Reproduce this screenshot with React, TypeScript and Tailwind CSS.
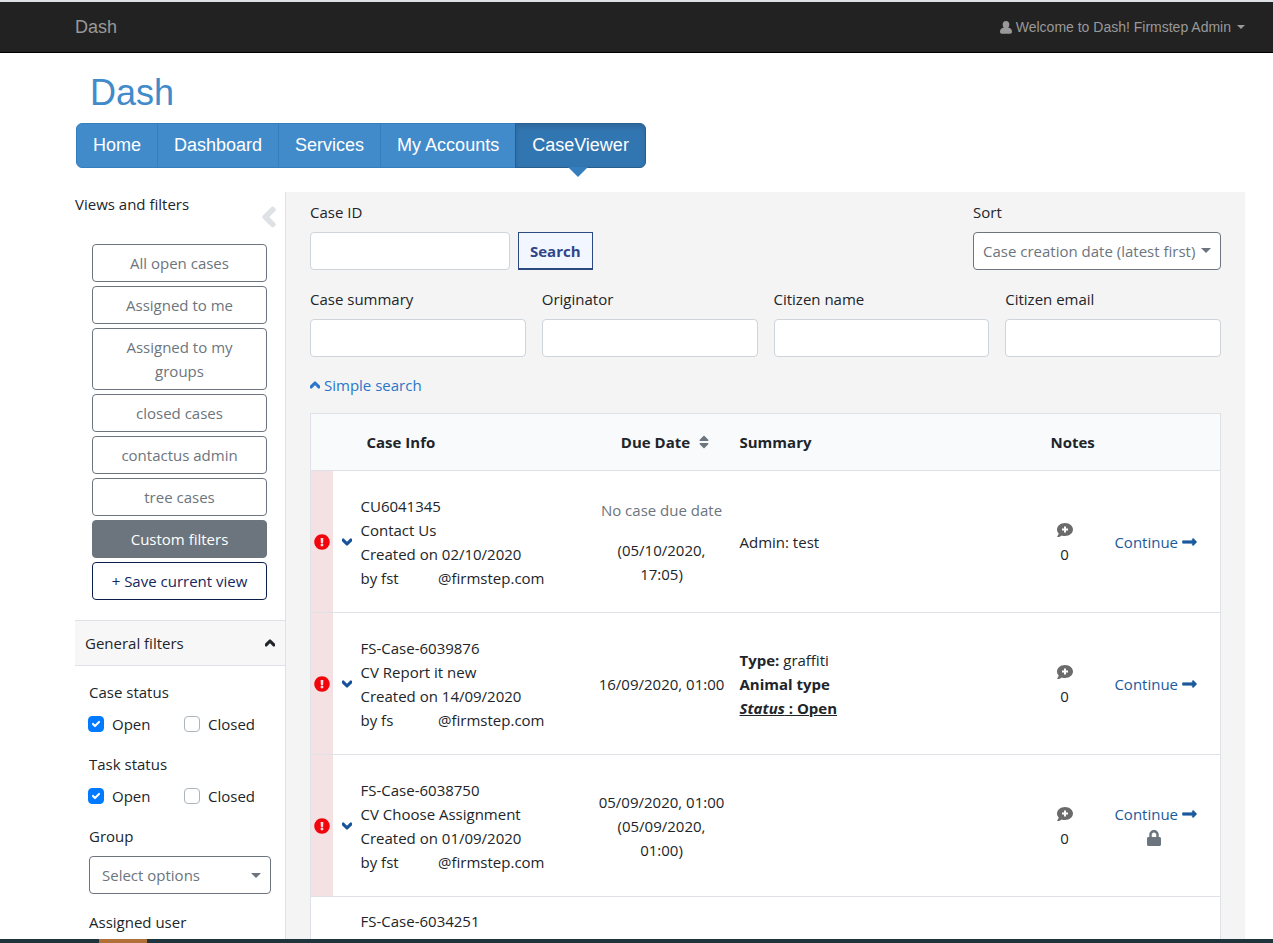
import React, { useState } from 'react';
import {
    FaChevronDown,
    FaChevronLeft,
    FaChevronUp,
    FaCheck,
    FaExclamationCircle,
    FaLock,
    FaLongArrowAltRight,
    FaSort,
} from 'react-icons/fa';
import clsx from 'clsx';

const NAV = ['Home', 'Dashboard', 'Services', 'My Accounts', 'CaseViewer'];

const VIEWS = ['All open cases', 'Assigned to me', 'Assigned to my groups', 'closed cases', 'contactus admin', 'tree cases', 'Custom filters'];

const SEARCH_FIELDS = [
    { id: 'summary', label: 'Case summary' },
    { id: 'originator', label: 'Originator' },
    { id: 'citizen-name', label: 'Citizen name' },
    { id: 'citizen-email', label: 'Citizen email' },
];

type CaseRow = {
    id: string;
    service?: string;
    created?: string;
    user?: string;
    due?: React.ReactNode;
    summary?: React.ReactNode;
    locked?: boolean;
};

const CASES: CaseRow[] = [
    {
        id: 'CU6041345',
        service: 'Contact Us',
        created: '02/10/2020',
        user: 'fst',
        due: (
            <>
                <p className="mb-4 whitespace-nowrap text-[#6c757d]">No case due date</p>
                <p>(05/10/2020, 17:05)</p>
            </>
        ),
        summary: 'Admin: test',
    },
    {
        id: 'FS-Case-6039876',
        service: 'CV Report it new',
        created: '14/09/2020',
        user: 'fs',
        due: <p className="whitespace-nowrap">16/09/2020, 01:00</p>,
        summary: (
            <>
                <p><b>Type:</b> graffiti</p>
                <p><b>Animal type</b></p>
                <p><b className="underline"><i>Status</i> : Open</b></p>
            </>
        ),
    },
    {
        id: 'FS-Case-6038750',
        service: 'CV Choose Assignment',
        created: '01/09/2020',
        user: 'fst',
        due: (
            <>
                <p className="whitespace-nowrap">05/09/2020, 01:00</p>
                <p>(05/09/2020, 01:00)</p>
            </>
        ),
        locked: true,
    },
    { id: 'FS-Case-6034251' },
];

function Caret({ className }: { className?: string }) {
    return (
        <svg viewBox="0 0 10 5" className={className} fill="currentColor" aria-hidden="true">
            <path d="M0 0h10L5 5z" />
        </svg>
    );
}

function UserIcon() {
    return (
        <svg viewBox="0 0 12 13" className="h-[13px] w-3" fill="currentColor" aria-hidden="true">
            <path d="M6 0c2.100 0 3.300 1.500 3.300 3.500 0 1.300-.4 2.500-1.100 3.300C10.600 7 12 8.300 12 10.800c0 1.300-.7 2-1.800 2H1.800c-1.100 0-1.800-.7-1.800-2C0 8.300 1.400 7 3.800 6.800 3.100 6 2.700 4.800 2.700 3.500 2.700 1.500 3.900 0 6 0z" />
        </svg>
    );
}

function CommentPlus() {
    return (
        <svg viewBox="0 0 16 14" className="h-[14px] w-4" aria-hidden="true">
            <path fill="#6b6b6b" d="M8 0c4.400 0 8 2.900 8 6.500S12.400 13 8 13c-1.200 0-2.300-.2-3.300-.6C3.500 13.300 1.900 14 .3 14c-.2 0-.3-.3-.1-.5.7-.8 1.300-1.900 1.500-3C.6 9.400 0 8 0 6.500 0 2.900 3.600 0 8 0z" />
            <path fill="#fff" d="M7 3.500h2v2h2v2H9v2H7v-2H5v-2h2z" />
        </svg>
    );
}

function Checkbox({ id, label, defaultChecked }: { id: string; label: string; defaultChecked?: boolean }) {
    return (
        <div className="flex w-24 items-center gap-2">
            <span className="relative flex h-4 w-4">
                <input
                    id={id}
                    type="checkbox"
                    defaultChecked={defaultChecked}
                    className="peer h-4 w-4 appearance-none rounded border border-[#adb5bd] bg-white checked:border-[#007bff] checked:bg-[#007bff]"
                />
                <FaCheck className="pointer-events-none absolute top-1 left-1 hidden h-2 w-2 stroke-[50] text-white peer-checked:block" />
            </span>
            <label htmlFor={id}>{label}</label>
        </div>
    );
}

function StatusFilter({ name, label }: { name: string; label: string }) {
    return (
        <fieldset className="mb-4">
            <legend className="mb-2">{label}</legend>
            <div className="-ml-px flex">
                <Checkbox id={`${name}-open`} label="Open" defaultChecked />
                <Checkbox id={`${name}-closed`} label="Closed" />
            </div>
        </fieldset>
    );
}

function Sidebar() {
    const [view, setView] = useState('Custom filters');
    return (
        <aside className="w-[210px] shrink-0">
            <div className="flex justify-between pr-2">
                <h2>Views and filters</h2>
                <button aria-label="Collapse filters" className="mt-[14px] text-[#dee2e6]">
                    <FaChevronLeft className="h-[22px] w-4 stroke-[50]" />
                </button>
            </div>
            <div className="mt-4 mb-5 flex flex-col gap-1 pr-[18px] pl-[17px]">
                {VIEWS.map(v => (
                    <button
                        key={v}
                        onClick={() => setView(v)}
                        className={clsx(
                            'rounded border border-[#6c757d] px-6 py-[6px]',
                            v === view ? 'bg-[#6c757d] text-white' : 'bg-white text-[#6c757d]'
                        )}
                    >
                        {v}
                    </button>
                ))}
                <button className="rounded border border-[#0b1d4d] bg-white py-[6px] text-[#14275e]">+ Save current view</button>
            </div>
            <button className="flex w-full items-center justify-between border-y border-[#dee2e6] bg-[#f7f7f7] py-[10px] pr-[10px] pl-[10px]">
                General filters
                <FaChevronUp className="h-3 w-[10px] stroke-[60]" />
            </button>
            <div className="pt-[14px] pr-[14px] pl-[14px]">
                <StatusFilter name="case" label="Case status" />
                <StatusFilter name="task" label="Task status" />
                <label htmlFor="group" className="mb-2 block">Group</label>
                <div className="relative mb-4 text-[#6c757d]">
                    <select id="group" className="h-[38px] w-full appearance-none rounded border border-[#6c757d] bg-white px-3">
                        <option>Select options</option>
                    </select>
                    <Caret className="pointer-events-none absolute top-[17px] right-[10px] h-[5px] w-[10px]" />
                </div>
                <p>Assigned user</p>
            </div>
        </aside>
    );
}

function SearchForm() {
    return (
        <form onSubmit={e => e.preventDefault()}>
            <div className="flex items-end justify-between">
                <div className="flex items-end gap-2">
                    <div>
                        <label htmlFor="case-id" className="mb-2 block">Case ID</label>
                        <input id="case-id" className="block h-[38px] w-[200px] rounded border border-[#ced4da] bg-white px-3" />
                    </div>
                    <button type="submit" className="h-[38px] border border-b-2 border-[#2b4a82] bg-[#f2f6ff] px-[11px] font-bold text-[#304589]">Search</button>
                </div>
                <div className="w-[248px]">
                    <label htmlFor="sort" className="mb-2 block">Sort</label>
                    <div className="relative text-[#6c757d]">
                        <select id="sort" className="block h-[38px] w-full appearance-none rounded border border-[#6c757d] bg-white pl-[9px]">
                            <option>Case creation date (latest first)</option>
                        </select>
                        <Caret className="pointer-events-none absolute top-4 right-[10px] h-[5px] w-[10px]" />
                    </div>
                </div>
            </div>
            <div className="mt-[17px] grid grid-cols-4 gap-4">
                {SEARCH_FIELDS.map(f => (
                    <div key={f.id}>
                        <label htmlFor={f.id} className="mb-2 block">{f.label}</label>
                        <input id={f.id} className="block h-[38px] w-full rounded border border-[#ced4da] bg-white px-3" />
                    </div>
                ))}
            </div>
            <a href="#" className="mt-4 inline-flex items-center gap-1 text-[#2b76c9]">
                <FaChevronUp className="h-3 w-[10px] stroke-[60]" /> Simple search
            </a>
        </form>
    );
}

function CaseTable() {
    return (
        <table className="mt-4 w-full table-fixed border-collapse border border-[#dee2e6] bg-white">
            <colgroup>
                <col className="w-[22px]" />
                <col className="w-7" />
                <col className="w-[229px]" />
                <col className="w-[144px]" />
                <col />
                <col className="w-16" />
                <col className="w-[124px]" />
            </colgroup>
            <thead>
                <tr className="h-[57px] border-b border-[#dee2e6] bg-[#f8fafc] text-left">
                    <th />
                    <th />
                    <th className="pl-[6px]">Case Info</th>
                    <th>
                        <button className="mx-auto flex items-center gap-2 pl-2 font-bold">
                            Due Date <FaSort className="h-4 w-3 text-[#6c757d]" />
                        </button>
                    </th>
                    <th className="pl-[6px]">Summary</th>
                    <th className="pl-[18px]">Notes</th>
                    <th />
                </tr>
            </thead>
            <tbody>
                {CASES.map(c => (
                    <tr key={c.id} className={clsx('border-b border-[#dee2e6]', c.service && 'h-[142px]')}>
                        <td className={c.service && 'bg-[#f3e1e3]'}>
                            {c.service && <FaExclamationCircle className="mx-auto h-4 w-4 text-[#f2040c]" />}
                        </td>
                        <td>
                            {c.service && (
                                <button aria-label={`Expand ${c.id}`} className="mx-auto block text-[#17529a]">
                                    <FaChevronDown className="h-3 w-[10px] stroke-[60]" />
                                </button>
                            )}
                        </td>
                        <td className="py-3">
                            <p>{c.id}</p>
                            <p>{c.service}</p>
                            {c.created && <p>Created on {c.created}</p>}
                            {c.user && (
                                <p className="flex w-[184px] justify-between">
                                    <span>by {c.user}</span>
                                    <span>@firmstep.com</span>
                                </p>
                            )}
                        </td>
                        <td className="px-[6px] text-center">{c.due}</td>
                        <td className="pl-[6px]">{c.summary}</td>
                        <td>
                            {c.service && (
                                <div className="flex flex-col items-center">
                                    <span className="flex h-6 items-center"><CommentPlus /></span>
                                    0
                                </div>
                            )}
                        </td>
                        <td>
                            {c.service && (
                                <div className="flex flex-col items-center pr-[5px]">
                                    <a href="#" className="flex items-center gap-1 whitespace-nowrap text-[#1b5a9c]">
                                        Continue <FaLongArrowAltRight className="h-4 w-[15px] stroke-[20]" />
                                    </a>
                                    {c.locked && <span className="flex h-6 items-center pr-1"><FaLock className="h-4 w-[14px] text-[#6c757d]" /></span>}
                                </div>
                            )}
                        </td>
                    </tr>
                ))}
            </tbody>
        </table>
    );
}

export default function App() {
    return (
        <div className="flex h-screen flex-col bg-white font-['Open_Sans','Noto_Sans',sans-serif] text-[15px] leading-6 text-[#212529]">
            <header className="flex h-[53px] shrink-0 items-center justify-between border-t-2 border-b border-t-[#dee2e6] border-b-black bg-[#222] pr-7 pl-[75px] font-['Liberation_Sans',Arial,sans-serif] text-[#999]">
                <a href="#" className="text-lg">Dash</a>
                <button className="flex items-center gap-1 text-sm">
                    <UserIcon />
                    Welcome to Dash! Firmstep Admin
                    <Caret className="ml-0.5 h-1 w-2" />
                </button>
            </header>

            <div className="flex min-h-0 flex-1 flex-col overflow-hidden pr-7 pl-[75px]">
                <div className="shrink-0 font-['Liberation_Sans',Arial,sans-serif]">
                    <h1 className="mt-5 mb-[10px] pl-[15px] text-4xl text-[#428bca]">Dash</h1>
                    <nav className="flex pl-px text-lg leading-6 text-white">
                        {NAV.map(item => (
                            <a
                                key={item}
                                href="#"
                                className={clsx(
                                    'relative -mr-px border px-4 pt-[9px] pb-[10px] first:rounded-l-md last:rounded-r-md',
                                    item === 'CaseViewer' ? 'border-[#285e8e] bg-[#3276b1] shadow-[inset_0_3px_5px_rgba(0,0,0,0.125)]' : 'border-[#357ebd] bg-[#428bca]'
                                )}
                            >
                                {item}
                                {item === 'CaseViewer' && <Caret className="absolute top-full left-[52px] h-[10px] w-5 text-[#357ebd]" />}
                            </a>
                        ))}
                    </nav>
                </div>

                <div className="mt-6 flex flex-1">
                    <Sidebar />
                    <main className="min-w-0 flex-1 border-l border-[#dee2e6] bg-[#f4f4f4] px-6 pt-2">
                        <SearchForm />
                        <CaseTable />
                    </main>
                </div>
            </div>

            <footer className="h-1 shrink-0 bg-[#20343e] pl-[99px]">
                <div className="h-1 w-12 bg-[#b0703a]" />
            </footer>
        </div>
    );
}
